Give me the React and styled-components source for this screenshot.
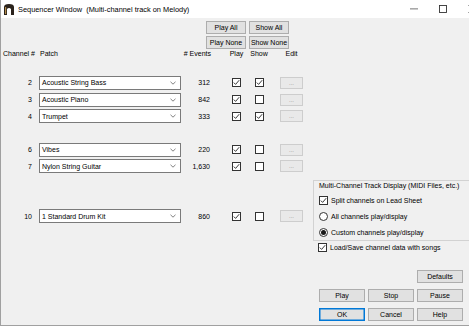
import React from "react";
import styled, { createGlobalStyle } from "styled-components";

const GlobalStyle = createGlobalStyle`
  html, body { margin: 0; padding: 0; background: #ffffff; }
  body { font-family: "Liberation Sans", Arial, sans-serif; font-size: 7px; color: #000; }
  * { box-sizing: border-box; }
`;

const Window = styled.div`
  width: 469px;
  height: 326px;
  display: flex;
  flex-direction: column;
  background: #f0f0f0;
  border-left: 1px solid #a0a0a0;
  border-bottom: 1px solid #a0a0a0;
  overflow: hidden;
`;

const TitleBar = styled.div`
  height: 18px;
  flex-shrink: 0;
  display: flex;
  align-items: center;
  background: #ffffff;
  padding-left: 3px;
`;

const TitleText = styled.span`
  margin-left: 4px;
  font-size: 7.4px;
  white-space: pre;
`;

const Controls = styled.div`
  margin-left: auto;
  display: flex;
  height: 100%;
  margin-right: -17px;
`;

const CtrlBox = styled.div`
  width: 29px;
  height: 100%;
  display: flex;
  align-items: center;
  justify-content: center;
`;

const Body = styled.div`
  flex: 1;
  display: flex;
`;

const LeftCol = styled.div`
  width: 312px;
  flex-shrink: 0;
  padding-top: 3px;
`;

const TopButtons = styled.div`
  margin-left: 205px;
  display: grid;
  grid-template-columns: 40px 40px;
  grid-auto-rows: 13px;
  column-gap: 3px;
  row-gap: 2px;
`;

const Button = styled.div`
  display: flex;
  align-items: center;
  justify-content: center;
  height: 13px;
  background: #e1e1e1;
  border: 1px solid ${p => (p.$default ? "#0078d7" : "#adadad")};
  box-shadow: ${p => (p.$default ? "inset 0 0 0 0.5px #0078d7" : "none")};
  color: #000;
  white-space: nowrap;
`;

const Row = styled.div`
  display: grid;
  grid-template-columns: 38px 142px 44px 23px 22px 43px;
  align-items: center;
  height: ${p => (p.$header ? "9px" : "16.67px")};
`;

const Cell = styled.div`
  display: flex;
  align-items: center;
  justify-content: ${p => p.$align || "flex-start"};
  padding-left: ${p => p.$pl || 0}px;
  padding-right: ${p => p.$pr || 0}px;
  white-space: nowrap;
`;

const Select = styled.div`
  width: 142px;
  height: 14px;
  background: #ffffff;
  border: 1px solid #7a7a7a;
  display: flex;
  align-items: center;
  padding: 0 4px 0 2px;
  justify-content: space-between;
`;

const EditButton = styled.div`
  width: 23px;
  height: 12px;
  background: #e9e9e9;
  border: 1px solid #cdcdcd;
  color: #8c8c8c;
  display: flex;
  align-items: center;
  justify-content: center;
  font-size: 6px;
  line-height: 1;
`;

const Box = styled.span`
  width: 9px;
  height: 9px;
  flex-shrink: 0;
  border: 1px solid #333333;
  background: #ffffff;
  display: inline-flex;
  align-items: center;
  justify-content: center;
  border-radius: ${p => (p.$round ? "50%" : "0")};
`;

const Dot = styled.span`
  width: 5px;
  height: 5px;
  border-radius: 50%;
  background: #1a1a1a;
`;

const RightCol = styled.div`
  flex: 1;
  display: flex;
  flex-direction: column;
  padding-top: 162px;
`;

const Group = styled.div`
  border-top: 1px solid #d2d2d2;
  border-left: 1px solid #d2d2d2;
  border-bottom: 1px solid #d2d2d2;
  padding-left: 5px;
`;

const GroupLabel = styled.div`
  height: 11px;
  line-height: 9px;
  white-space: nowrap;
`;

const Option = styled.div`
  display: flex;
  align-items: center;
  gap: 3px;
  height: ${p => p.$h || 16}px;
  padding-left: ${p => p.$pl || 0}px;
  white-space: nowrap;
`;

const ButtonGrid = styled.div`
  display: grid;
  grid-template-columns: repeat(3, 46px);
  grid-auto-rows: 13px;
  column-gap: 3px;
  row-gap: 6px;
  padding-left: 6px;
  margin-top: ${p => p.$mt || 0}px;
`;

const Check = ({ checked }) => (
  <Box>
    {checked && (
      <svg width="7" height="7" viewBox="0 0 7 7">
        <polyline points="0.8,3.6 2.6,5.4 6.2,1.2" fill="none" stroke="#222" strokeWidth="0.9" />
      </svg>
    )}
  </Box>
);

const Radio = ({ checked }) => <Box $round>{checked && <Dot />}</Box>;

const Chevron = () => (
  <svg width="6" height="4" viewBox="0 0 6 4">
    <polyline points="0.5,0.8 3,3.2 5.5,0.8" fill="none" stroke="#606060" strokeWidth="0.8" />
  </svg>
);

const AppIcon = () => (
  <svg width="10" height="11" viewBox="0 0 10 11">
    <path d="M0 11 V3 Q0 0 5 0 Q10 0 10 3 V11 H7 V5 Q5 3 3 5 V11 Z" fill="#2b231c" />
    <rect x="1" y="3" width="1.2" height="7" fill="#b08a4a" />
  </svg>
);

const channels = [
  { ch: 1 },
  { ch: 2, patch: "Acoustic String Bass", events: "312", play: true, show: true },
  { ch: 3, patch: "Acoustic Piano", events: "842", play: true, show: false },
  { ch: 4, patch: "Trumpet", events: "333", play: true, show: true },
  { ch: 5 },
  { ch: 6, patch: "Vibes", events: "220", play: true, show: false },
  { ch: 7, patch: "Nylon String Guitar", events: "1,630", play: true, show: false },
  { ch: 8 },
  { ch: 9 },
  { ch: 10, patch: "1 Standard Drum Kit", events: "860", play: true, show: false },
];

export default function App() {
  return (
    <>
      <GlobalStyle />
      <Window>
        <TitleBar>
          <AppIcon />
          <TitleText>Sequencer Window  (Multi-channel track on Melody)</TitleText>
          <Controls>
            <CtrlBox>
              <svg width="8" height="2" viewBox="0 0 8 2"><rect y="0.5" width="8" height="0.8" fill="#555" /></svg>
            </CtrlBox>
            <CtrlBox>
              <svg width="8" height="8" viewBox="0 0 8 8"><rect x="0.5" y="0.5" width="7" height="7" fill="none" stroke="#333" strokeWidth="0.9" /></svg>
            </CtrlBox>
            <CtrlBox>
              <svg width="8" height="8" viewBox="0 0 8 8"><path d="M0.5 0.5 L7.5 7.5 M7.5 0.5 L0.5 7.5" stroke="#333" strokeWidth="0.9" /></svg>
            </CtrlBox>
          </Controls>
        </TitleBar>
        <Body>
          <LeftCol>
            <TopButtons>
              <Button>Play All</Button>
              <Button>Show All</Button>
              <Button>Play None</Button>
              <Button>Show None</Button>
            </TopButtons>
            <Row $header>
              <Cell $pl={2}>Channel #</Cell>
              <Cell $pl={1}>Patch</Cell>
              <Cell $align="flex-end" $pr={14}># Events</Cell>
              <Cell $align="center">Play</Cell>
              <Cell $align="center">Show</Cell>
              <Cell $align="center">Edit</Cell>
            </Row>
            {channels.map(c => (
              <Row key={c.ch}>
                {c.patch && (
                  <>
                    <Cell $align="flex-end" $pr={7}>{c.ch}</Cell>
                    <Cell>
                      <Select>
                        <span>{c.patch}</span>
                        <Chevron />
                      </Select>
                    </Cell>
                    <Cell $align="flex-end" $pr={15}>{c.events}</Cell>
                    <Cell $align="center"><Check checked={c.play} /></Cell>
                    <Cell $align="center"><Check checked={c.show} /></Cell>
                    <Cell $align="center"><EditButton>...</EditButton></Cell>
                  </>
                )}
              </Row>
            ))}
          </LeftCol>
          <RightCol>
            <Group>
              <GroupLabel>Multi-Channel Track Display (MIDI Files, etc.)</GroupLabel>
              <Option><Check checked />Split channels on Lead Sheet</Option>
              <Option><Radio />All channels play/display</Option>
              <Option><Radio checked />Custom channels play/display</Option>
            </Group>
            <Option $h={12} $pl={5}><Check checked />Load/Save channel data with songs</Option>
            <ButtonGrid $mt={17}>
              <span />
              <span />
              <Button>Defaults</Button>
            </ButtonGrid>
            <ButtonGrid $mt={6}>
              <Button>Play</Button>
              <Button>Stop</Button>
              <Button>Pause</Button>
              <Button $default>OK</Button>
              <Button>Cancel</Button>
              <Button>Help</Button>
            </ButtonGrid>
          </RightCol>
        </Body>
      </Window>
    </>
  );
}
